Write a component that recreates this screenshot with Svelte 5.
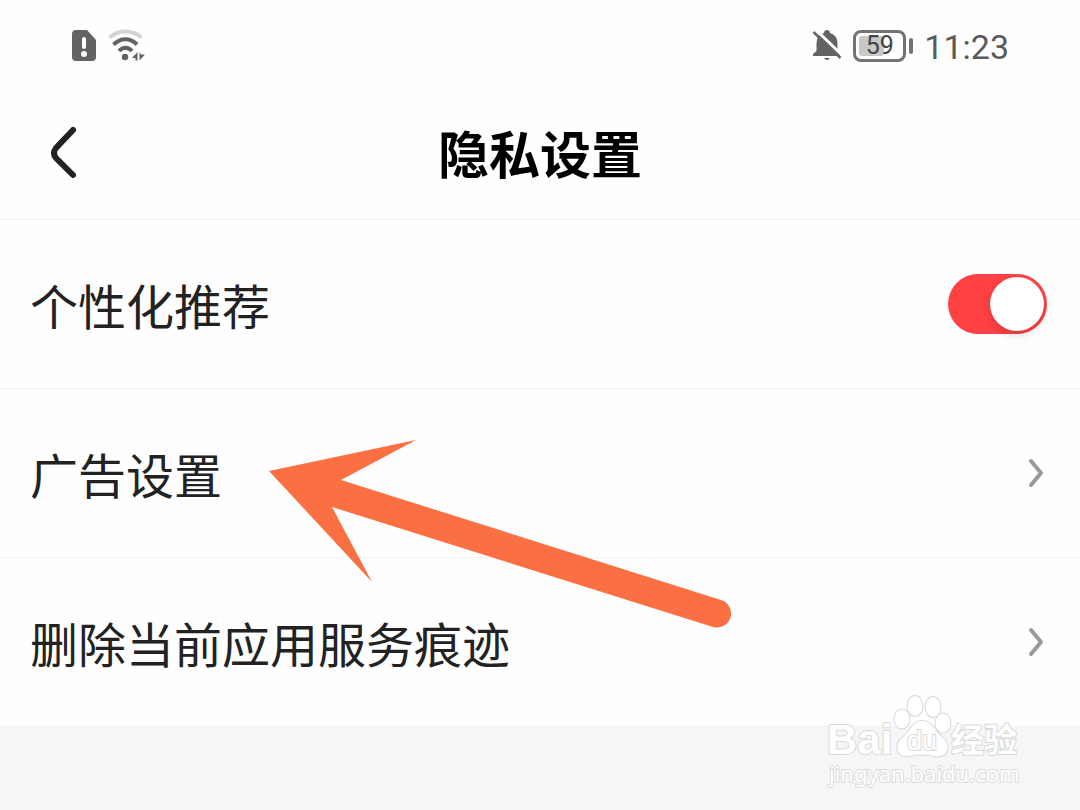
<script>
    let personalized = $state(true)

    const links = ["广告设置", "删除当前应用服务痕迹"]
    const battery = 59
</script>

<div class="status">
    <div class="status-group">
        <svg width="26" height="34" viewBox="0 0 26 34" aria-hidden="true">
            <path d="M5 1H16L25 11V28Q25 32 21 32H5Q1 32 1 28V5Q1 1 5 1Z" fill="#636363"/>
            <path d="M13 10V18" stroke="#fff" stroke-width="4" stroke-linecap="round"/>
            <circle cx="13" cy="25" r="3" fill="#fff"/>
        </svg>
        <svg width="40" height="34" viewBox="0 0 40 34" fill="none" aria-hidden="true">
            <path d="M1.5 8.5C11 .5 24 .5 33.5 8.5" stroke="#d4d4d4" stroke-width="4"/>
            <path d="M5.5 15.5C13 8.5 22 8.5 29 15.5" stroke="#636363" stroke-width="4"/>
            <path d="M11 22C15 17.5 20 17.5 24 22" stroke="#636363" stroke-width="4"/>
            <circle cx="17" cy="28" r="3.2" fill="#636363"/>
            <path d="M29.500 23V31.500H27.500V29H24ZM31.500 31.500V23L33 25.500H37Z" fill="#636363"/>
        </svg>
    </div>
    <div class="status-group">
        <svg width="30" height="34" viewBox="0 0 30 34" aria-hidden="true">
            <path d="M4.500 22V15Q4.500 6 12 4Q12 1 15 1Q18 1 18 4Q25.500 6 25.500 15V22L28 25V27H1V25Z" fill="#636363"/>
            <path d="M12 29H18Q17 31 15 31Q13 31 12 29Z" fill="#636363"/>
            <path d="M4 1L31 27" stroke="#fefefe" stroke-width="3"/>
            <path d="M1.500 3L28.500 29" stroke="#636363" stroke-width="2.500"/>
        </svg>
        <div class="battery">
            <div class="battery-body">
                <div class="battery-fill" style="width: {battery}%"></div>
                <span class="battery-text">{battery}</span>
            </div>
            <div class="battery-tip"></div>
        </div>
        <span class="time">11:23</span>
    </div>
</div>

<header class="header">
    <button class="back" aria-label="返回">
        <svg width="32" height="56" viewBox="0 0 32 56" aria-hidden="true">
            <path d="M25 5L8 23Q4 28 8 33L25 50" fill="none" stroke="#222" stroke-width="6" stroke-linecap="round"/>
        </svg>
    </button>
    <h1>隐私设置</h1>
</header>

<main class="list">
    <label class="row">
        <span>个性化推荐</span>
        <input type="checkbox" role="switch" class="switch" bind:checked={personalized}/>
    </label>
    {#each links as link}
        <a class="row" href="#top">
            <span>{link}</span>
            <svg width="18" height="32" viewBox="0 0 18 32" aria-hidden="true">
                <path d="M4 4L14 16L4 28" fill="none" stroke="#999" stroke-width="4" stroke-linecap="round" stroke-linejoin="round"/>
            </svg>
        </a>
    {/each}

    <svg class="arrow" width="463" height="189" viewBox="0 0 463 189" aria-hidden="true">
        <path d="M0 31L147 0L72 40L452 160A14 14 0 0 1 444 187L63 67L103 142Z" fill="#fa7042"/>
    </svg>
</main>

<footer class="footer">
    <svg class="watermark" width="200" height="96" viewBox="0 0 200 96">
        <g class="outlined">
            <text class="brand" x="1" y="59">Bai</text>
            <ellipse cx="76" cy="24" rx="7.500" ry="9.500"/>
            <ellipse cx="89" cy="11" rx="7.500" ry="10"/>
            <ellipse cx="107" cy="12" rx="7.500" ry="10"/>
            <ellipse cx="117" cy="28" rx="7.500" ry="9.500"/>
            <path d="M96 26C86 26 85 36 77 42C67 50 71 63 83 61C92 59 100 59 108 61C121 64 126 51 117 43C108 36 107 26 96 26Z"/>
            <text class="du" x="81" y="55">du</text>
            <text class="brand-cn" x="125" y="57">经验</text>
        </g>
        <text class="site" x="3" y="87">jingyan.baidu.com</text>
    </svg>
</footer>

<style>
    :global(body) {
        background-color: #fefefe;
        font-family: Roboto, "Noto Sans CJK SC", sans-serif;
    }

    .status {
        display: flex;
        justify-content: space-between;
        align-items: center;

        height: 92px;
        padding: 0 71px;
        box-sizing: border-box;
    }

    .status-group {
        display: flex;
        align-items: center;
        gap: 11px;
    }

    .battery {
        display: flex;
        align-items: center;
        gap: 3px;
    }

    .battery-body {
        position: relative;
        width: 53px;
        height: 32px;
        padding: 3px;
        box-sizing: border-box;

        border: 3px solid #737373;
        border-radius: 8px;
    }

    .battery-fill {
        height: 100%;
        border-radius: 3px;
        background-color: #c8c8c8;
    }

    .battery-text {
        position: absolute;
        inset: 0;

        font-size: 25px;
        line-height: 26px;
        text-align: center;
        color: #444;
    }

    .battery-tip {
        width: 4px;
        height: 16px;
        border-radius: 2px;
        background-color: #737373;
    }

    .time {
        padding-top: 2px;
        font-size: 34px;
        line-height: 40px;
        color: #5a5a5a;
    }

    .header {
        display: grid;
        grid-template-columns: 1fr auto 1fr;
        align-items: center;

        height: 128px;
        padding: 0 48px;
        box-sizing: border-box;
        border-bottom: 1px solid #f3f3f3;
    }

    .back {
        justify-self: start;
        display: flex;
        padding: 0 0 6px;
        border: none;
        background: none;
    }

    h1 {
        margin: 0;
        padding-top: 2px;
        font-size: 51px;
        line-height: 64px;
        font-weight: 700;
        color: #000;
    }

    .list {
        position: relative;
    }

    .row {
        display: flex;
        justify-content: space-between;
        align-items: center;

        height: 169px;
        padding: 0 33px 0 30px;
        box-sizing: border-box;
        border-bottom: 1px solid #f3f3f3;

        font-size: 48px;
        line-height: 64px;
        color: #222;
        text-decoration: none;
    }

    .row span {
        padding-top: 10px;
    }

    .row svg {
        margin-right: 2px;
    }

    .switch {
        appearance: none;
        display: flex;
        align-items: center;

        width: 99px;
        height: 60px;
        margin: 0;
        padding: 0 3px;
        box-sizing: border-box;

        border-radius: 30px;
        background-color: #ccc;
    }

    .switch::before {
        content: "";
        width: 54px;
        height: 54px;
        border-radius: 50%;
        background-color: #fff;
        box-shadow: 0 4px 8px rgba(0, 0, 0, 0.15);
    }

    .switch:checked {
        justify-content: flex-end;
        background-color: #ff4144;
    }

    .arrow {
        position: absolute;
        top: 220px;
        left: 269px;
        pointer-events: none;
    }

    .footer {
        position: relative;
        height: 84px;
        background-color: #f6f6f6;
    }

    .watermark {
        position: absolute;
        right: 54px;
        bottom: 20px;
        overflow: visible;
    }

    .outlined {
        fill: #fff;
        stroke: #d9d9d9;
        stroke-width: 2px;
        paint-order: stroke;
    }

    .brand {
        font: 700 42px "Liberation Sans", sans-serif;
    }

    .du {
        font: 400 27px "Liberation Sans", sans-serif;
    }

    .brand-cn {
        font: 700 33px "Noto Sans CJK SC", sans-serif;
    }

    .site {
        font: 400 22px "Noto Sans", sans-serif;
        fill: #fff;
        stroke: #dcdcdc;
        stroke-width: 2px;
        paint-order: stroke;
    }
</style>
